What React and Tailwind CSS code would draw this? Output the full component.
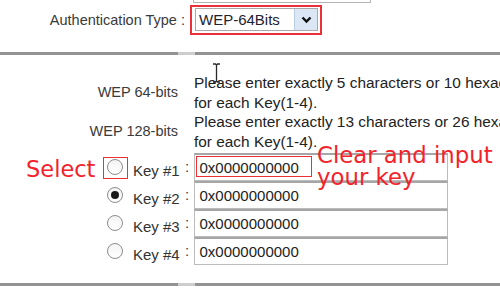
export default function App() {
  const keys = [1, 2, 3, 4];
  return (
    <div className="relative w-[500px] h-[289px] overflow-hidden bg-white font-['Liberation_Sans',Arial,sans-serif] text-[#333]">
      {/* stub of field above */}
      <div className="ml-[193px] w-[178px] h-[3px] border border-t-0 border-[#b4b4b4]" />

      {/* Authentication type row */}
      <div className="flex items-center mt-[2px] h-[30px]">
        <div className="w-[185px] text-right text-[14.5px] leading-[17px] text-[#3a3a3a] whitespace-nowrap">
          Authentication Type :
        </div>
        <div className="ml-[5px] w-[132px] h-[30px] border-2 border-[#ec3038] pl-[3px] pt-[1px]">
          <div className="flex w-[123px] h-[23px] border border-[#a9a9a9] bg-white">
            <div className="flex-1 flex items-center pl-[3px] text-[15px] text-[#1e2230] leading-none">
              WEP-64Bits
            </div>
            <div className="w-[23px] h-full bg-[#dbe7f4] border-l border-[#b9cde2] flex items-center justify-center">
              <svg width="11" height="8" viewBox="0 0 11 8">
                <path d="M1.5 1.5 L5.5 5.5 L9.5 1.5" fill="none" stroke="#111" strokeWidth="2.4" />
              </svg>
            </div>
          </div>
        </div>
      </div>

      {/* rule */}
      <div className="mt-[16.5px] flex h-[3px]">
        <div className="w-[178px] bg-[#939393]" />
        <div className="w-[17px] bg-[#cdcdcd]" />
        <div className="flex-1 bg-[#939393]" />
      </div>

      {/* WEP description grid */}
      <div className="mt-[18.5px] grid grid-cols-[178px_1fr] gap-x-[16px]">
        <div className="self-center text-right text-[14.5px] leading-[17px] text-[#3a3a3a] whitespace-nowrap">WEP 64-bits</div>
        <div className="text-[15.4px] leading-[19.5px] text-[#222] whitespace-nowrap">
          <div>Please enter exactly 5 characters or 10 hexadecimal digits</div>
          <div>for each Key(1-4).</div>
        </div>
        <div className="self-center text-right text-[14.5px] leading-[17px] text-[#3a3a3a] whitespace-nowrap">WEP 128-bits</div>
        <div className="text-[15.4px] leading-[19.5px] text-[#222] whitespace-nowrap">
          <div>Please enter exactly 13 characters or 26 hexadecimal digits</div>
          <div>for each Key(1-4).</div>
        </div>
      </div>

      {/* Key rows */}
      <div className="mt-[1.5px]">
        {keys.map((k) => (
          <div key={k} className="flex h-[28px]">
            <div className="w-[107px]" />
            <div className="relative self-center w-[16px] h-[16px]">
              <div className="w-[16px] h-[16px] rounded-full border border-[#8c8c8c] bg-gradient-to-b from-[#f4f4f4] to-white flex items-center justify-center">
                {k === 2 && <div className="w-[8px] h-[8px] rounded-full bg-[#1a1a1a]" />}
              </div>
              {k === 1 && (
                <div className="absolute left-[-4px] top-[-2px] w-[25px] h-[22px] border-[1.5px] border-[#ec3038]" />
              )}
            </div>
            <div className="ml-[10px] w-[52px] pt-[9px] text-[15px] leading-[17px] text-[#333] whitespace-nowrap">
              Key #{k}
            </div>
            <div className="w-[9px] pt-[5px] text-[15px] leading-[17px] text-[#444]">:</div>
            <div className="relative w-[254px] h-[28px] border border-[#bcbcbc] border-t-2 border-t-[#a6a6a6] bg-white flex items-center pl-[4.5px] text-[15px] text-[#222] leading-none">
              0x0000000000
              {k === 1 && (
                <div className="absolute left-[1px] top-[1px] w-[116px] h-[21px] border-[1.5px] border-[#ec3038]" />
              )}
            </div>
          </div>
        ))}
      </div>

      {/* bottom rule */}
      <div className="mt-[18px] flex h-[3px]">
        <div className="w-[178px] bg-[#939393]" />
        <div className="w-[17px] bg-[#cdcdcd]" />
        <div className="flex-1 bg-[#939393]" />
      </div>

      {/* annotations */}
      <div className="absolute left-[26px] top-[157.5px] text-[22.5px] leading-[22px] text-[#f2232b] font-['DejaVu_Sans',Verdana,sans-serif] whitespace-nowrap">
        Select
      </div>
      <div className="absolute left-[317px] top-[144px] text-[22.8px] leading-[22px] text-[#f2232b] font-['DejaVu_Sans',Verdana,sans-serif] whitespace-nowrap">
        <div>Clear and input</div>
        <div>your key</div>
      </div>

      {/* mouse I-beam cursor */}
      <svg className="absolute left-[212px] top-[63px]" width="9" height="20" viewBox="0 0 9 20">
        <path d="M1 1 H3.5 L4.5 2 L5.5 1 H8 M4.5 2 V18 M1 19 H3.5 L4.5 18 L5.5 19 H8" fill="none" stroke="#2a2a2a" strokeWidth="1.3" />
      </svg>
    </div>
  );
}
